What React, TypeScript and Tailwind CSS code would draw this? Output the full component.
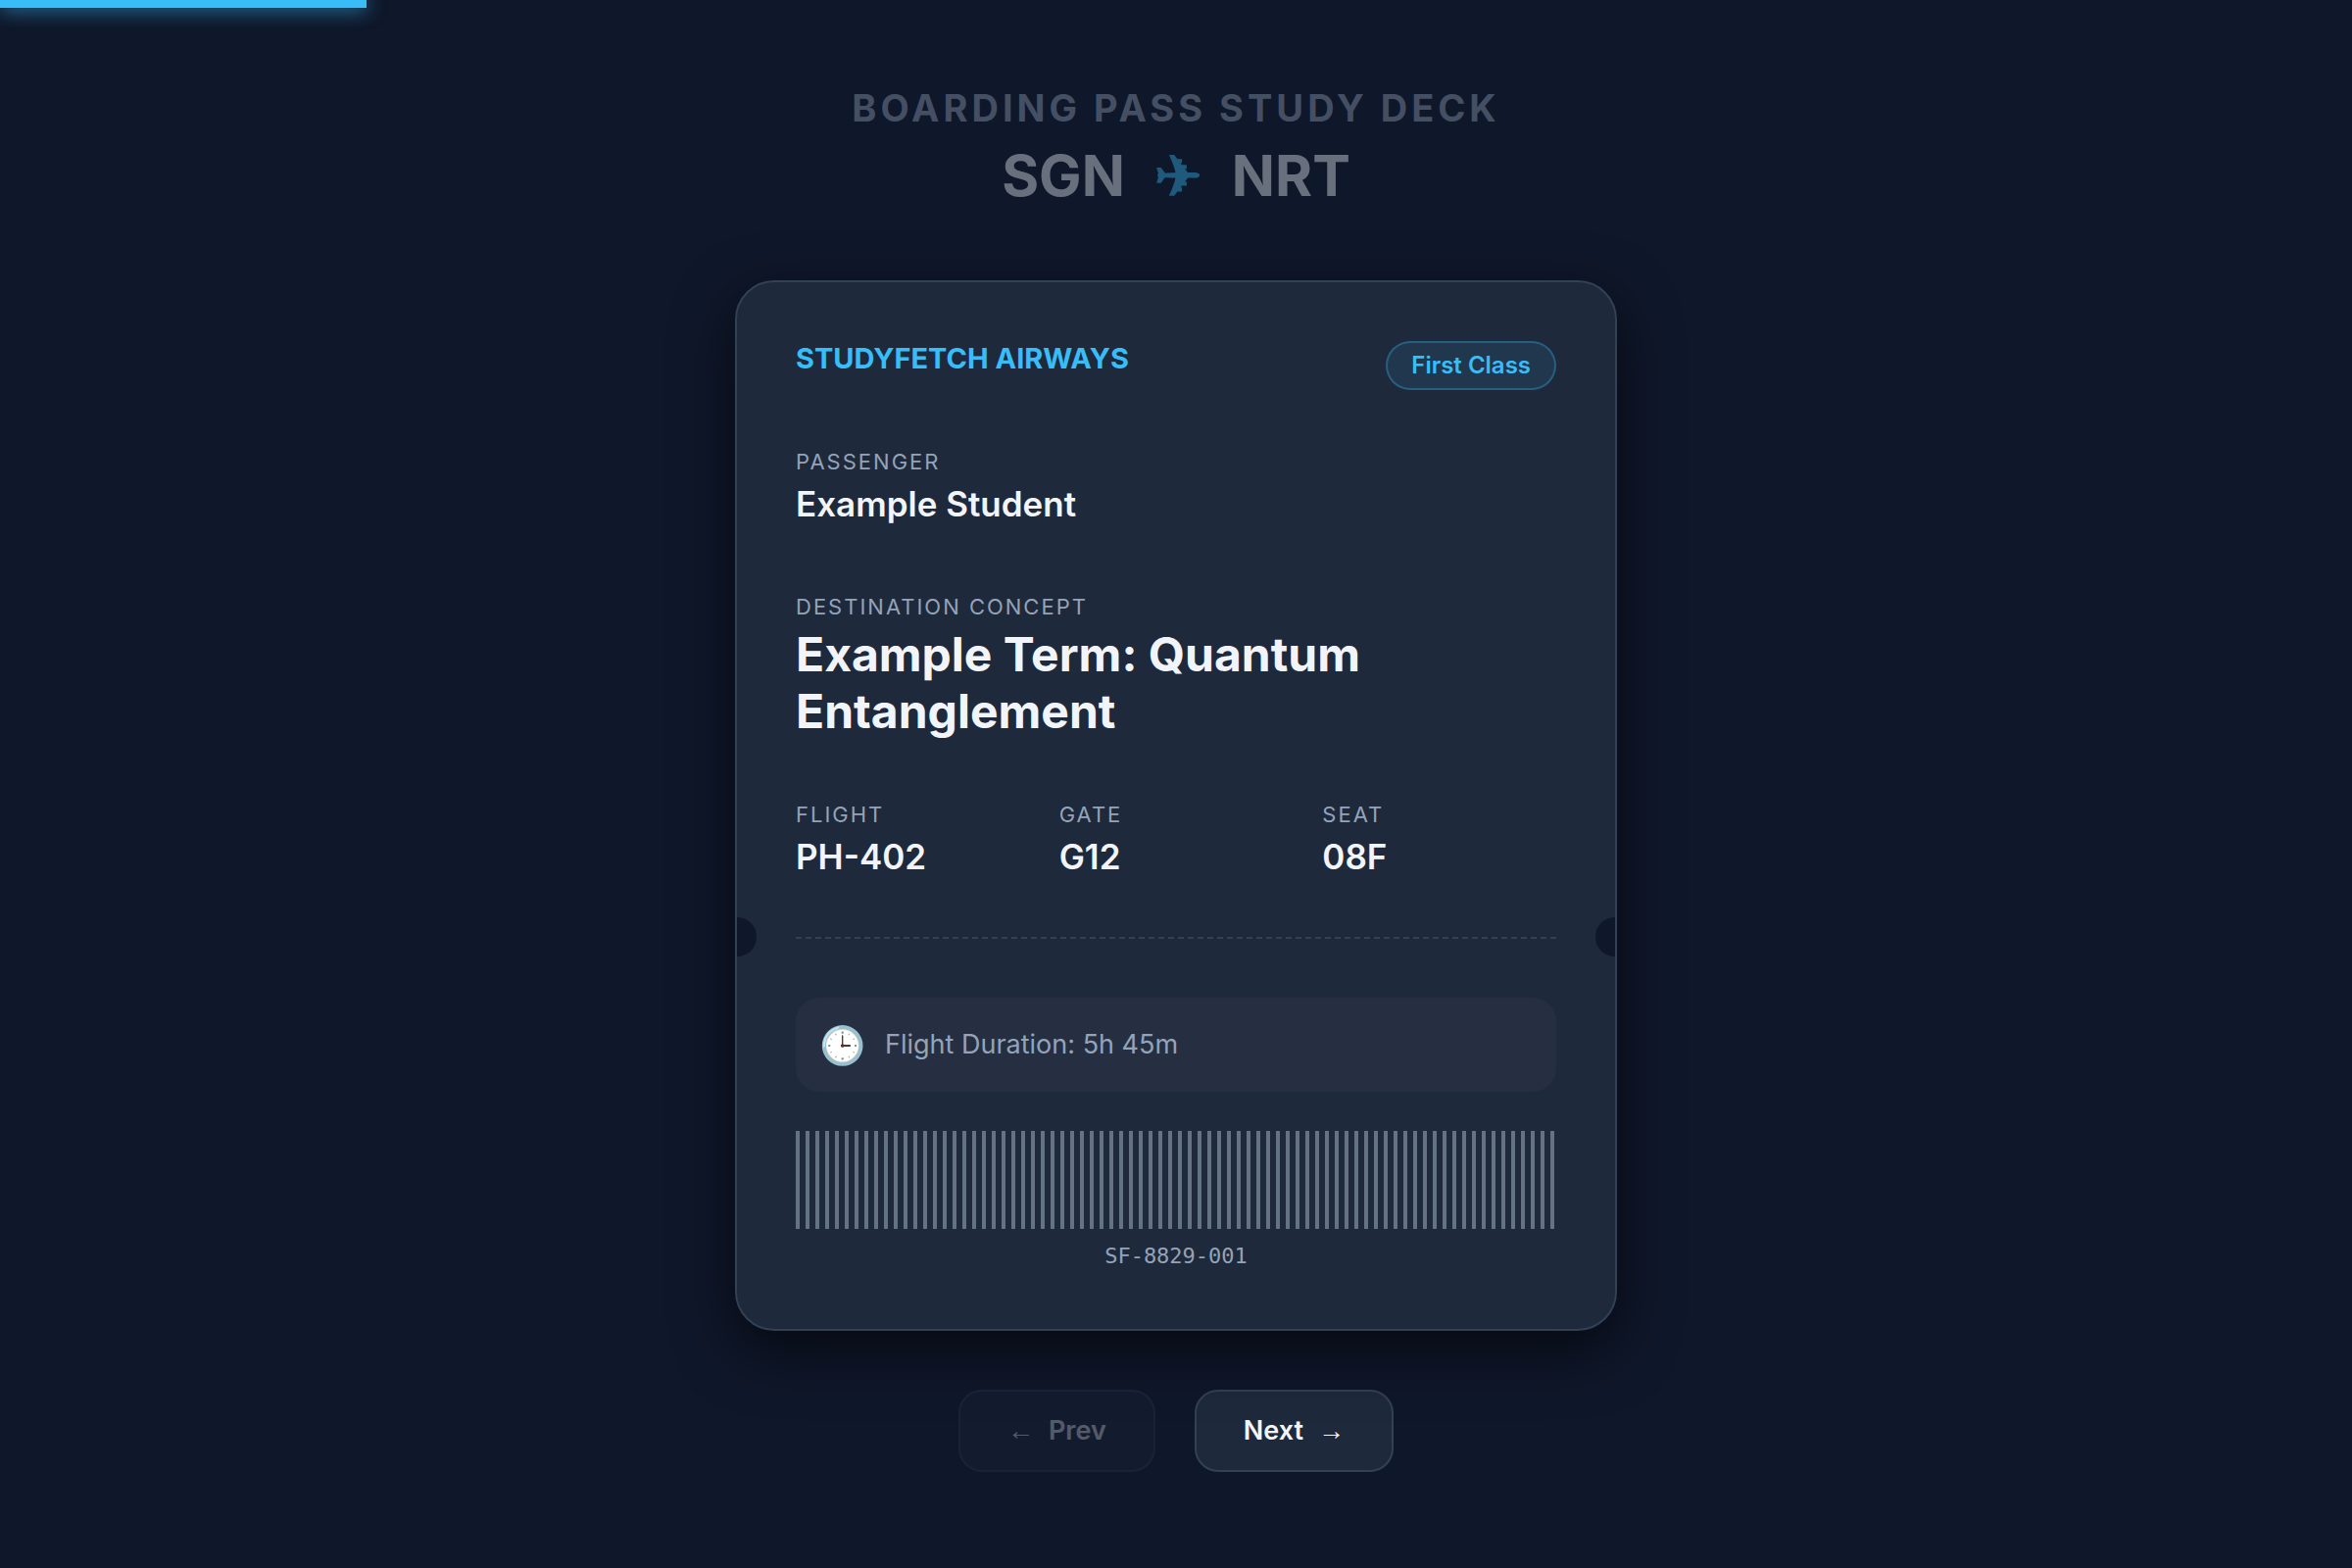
interface Field {
  label: string;
  value: string;
}

const flightInfo: Field[] = [
  { label: "Flight", value: "PH-402" },
  { label: "Gate", value: "G12" },
  { label: "Seat", value: "08F" },
];

function FieldLabel({ children }: { children: string }) {
  return (
    <dt className="text-[22px] leading-[27px] tracking-[2px] uppercase text-[#94a3b8]">
      {children}
    </dt>
  );
}

function InfoField({ label, value }: Field) {
  return (
    <div>
      <FieldLabel>{label}</FieldLabel>
      <dd className="mt-2 text-[35px] leading-[43px] font-semibold">{value}</dd>
    </div>
  );
}

function BoardingPass() {
  return (
    <article className="relative mt-[72px] w-full overflow-hidden rounded-[40px] border-2 border-[#334155] bg-[#1e293b] p-[60px] text-[#f1f5f9] shadow-[0_20px_60px_rgba(0,0,0,0.6)]">
      <div className="flex items-start justify-between">
        <div className="text-[29px] leading-[35px] font-bold text-[#38bdf8]">
          STUDYFETCH AIRWAYS
        </div>
        <div className="rounded-full border-2 border-[#38bdf84d] bg-[#38bdf81a] px-6 py-2 text-2xl leading-[30px] font-semibold text-[#38bdf8]">
          First Class
        </div>
      </div>

      <dl className="mt-[60px]">
        <InfoField label="Passenger" value="Example Student" />
        <div className="mt-[70px]">
          <FieldLabel>Destination Concept</FieldLabel>
          <dd className="mt-[6px] text-5xl leading-[58px] font-bold">
            Example Term: Quantum Entanglement
          </dd>
        </div>
        <div className="mt-[63px] grid grid-cols-3 gap-[30px]">
          {flightInfo.map((f) => (
            <InfoField key={f.label} label={f.label} value={f.value} />
          ))}
        </div>
      </dl>

      {/* Tear line with a notch on each edge */}
      <div className="relative mt-[60px] border-t-2 border-dashed border-[#334155]">
        <span className="absolute -top-[22px] -left-20 size-10 rounded-full bg-[#0f172a]" />
        <span className="absolute -top-[22px] -right-20 size-10 rounded-full bg-[#0f172a]" />
      </div>

      <div className="mt-[60px] flex h-24 items-center gap-5 rounded-3xl bg-white/3 px-6">
        <span className="text-[38px] leading-12">🕒</span>
        <span className="text-[27px] leading-8 text-[#94a3b8]">
          Flight Duration: 5h 45m
        </span>
      </div>

      {/* Barcode */}
      <div className="mt-10 h-[100px] bg-[repeating-linear-gradient(90deg,#94a3b8_0,#94a3b8_4px,transparent_4px,transparent_10px)] opacity-60" />
      <p className="mt-[14px] text-center font-['DejaVu_Sans_Mono',monospace] text-[22px] leading-7 text-[#94a3b8]">
        SF-8829-001
      </p>
    </article>
  );
}

const navButton =
  "flex items-center gap-[15px] rounded-3xl border-2 border-[#334155] bg-[#1e293b] px-12 py-6 text-[27px] leading-8 font-semibold text-[#f1f5f9] disabled:opacity-30";

export default function App() {
  return (
    <div className="min-h-screen bg-[#0f172a] px-10 pt-[87px] pb-10 font-['Inter',sans-serif]">
      {/* Deck progress */}
      <div className="fixed top-0 left-0 h-2 w-[15.6%] bg-[#38bdf8] shadow-[0_0_20px_#38bdf8]" />

      <main className="mx-auto flex max-w-[900px] flex-col items-center">
        <header className="text-center opacity-40">
          <h1 className="text-[38px] leading-[46px] font-bold tracking-[4px] text-[#94a3b8] uppercase">
            Boarding Pass Study Deck
          </h1>
          <div className="mt-[11px] flex items-center justify-center gap-[30px] text-[58px] leading-[70px] font-bold text-[#f1f5f9]">
            <span>SGN</span>
            <span className="text-[#38bdf8]">✈</span>
            <span>NRT</span>
          </div>
        </header>

        <BoardingPass />

        <nav className="mt-[60px] flex gap-10">
          <button type="button" disabled className={navButton}>
            <span className="font-['Liberation_Sans',sans-serif]">←</span>
            Prev
          </button>
          <button type="button" className={navButton}>
            Next
            <span className="font-['Liberation_Sans',sans-serif]">→</span>
          </button>
        </nav>
      </main>
    </div>
  );
}
